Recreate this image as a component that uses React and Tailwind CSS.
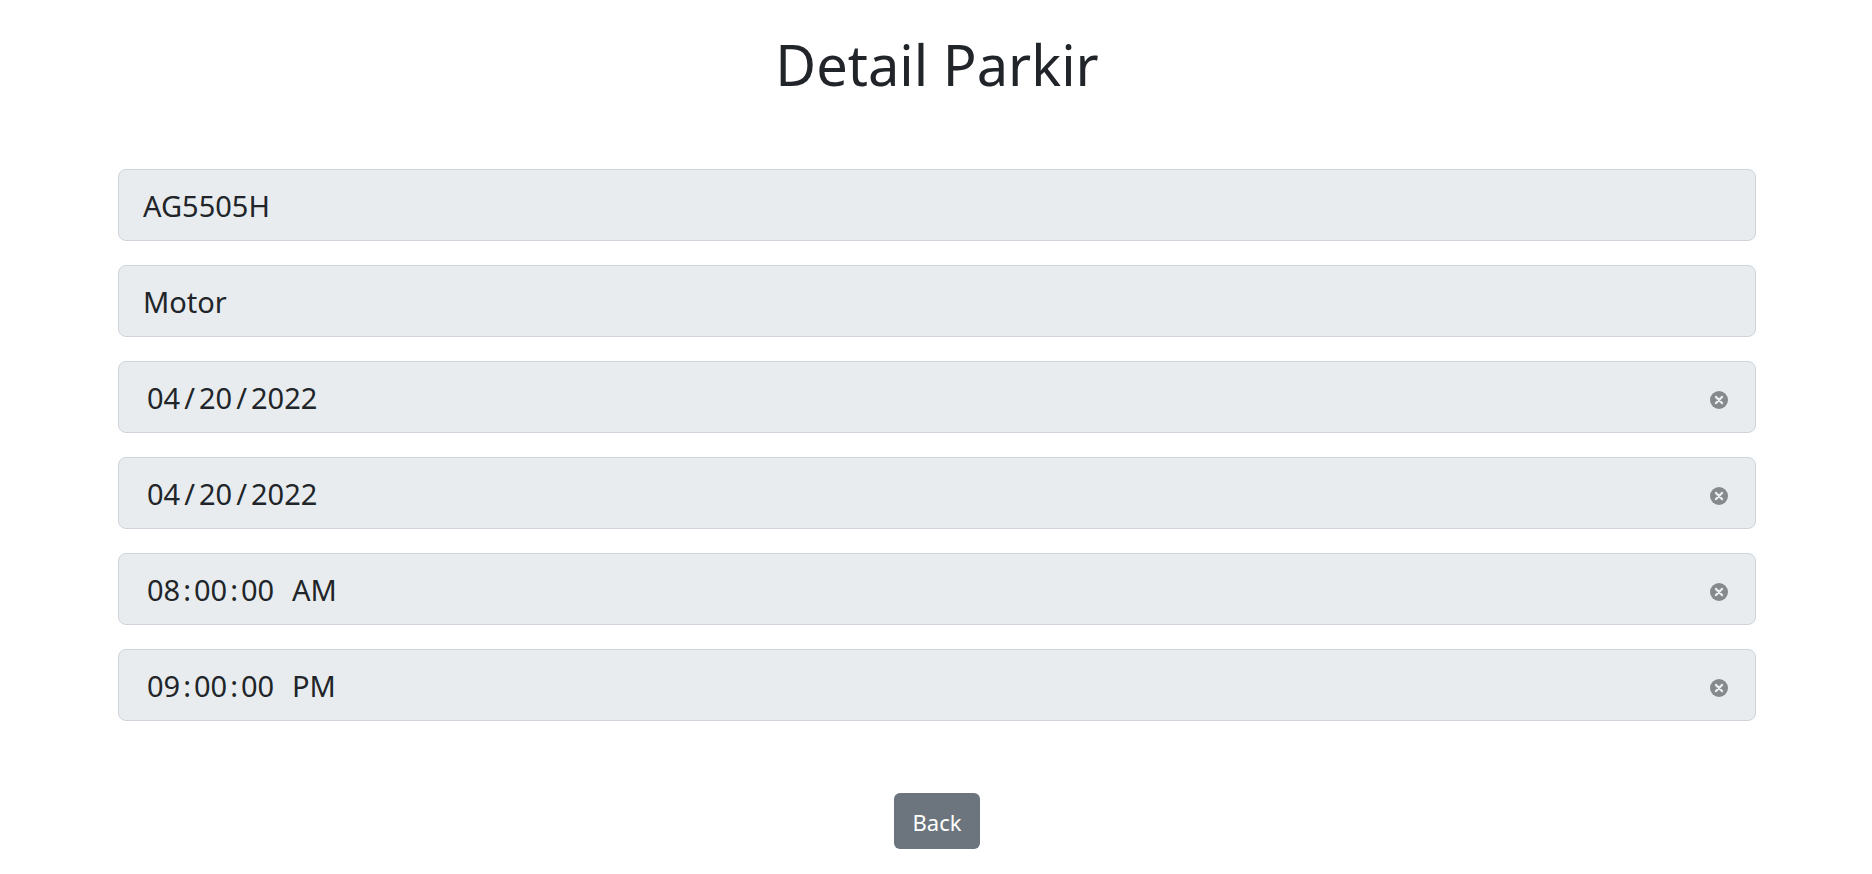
const fields = [
  { id: 'plate', label: 'Plat Nomor', type: 'text', value: 'AG5505H' },
  { id: 'vehicle', label: 'Jenis Kendaraan', type: 'text', value: 'Motor' },
  { id: 'date-in', label: 'Tanggal Masuk', type: 'date', value: '2022-04-20' },
  { id: 'date-out', label: 'Tanggal Keluar', type: 'date', value: '2022-04-20' },
  { id: 'time-in', label: 'Jam Masuk', type: 'time', value: '08:00:00' },
  { id: 'time-out', label: 'Jam Keluar', type: 'time', value: '21:00:00' },
];

const inputStyles = {
  text: 'pb-0.5',
  date: 'pl-px [&::-webkit-calendar-picker-indicator]:hidden [&::-webkit-datetime-edit-month-field]:px-[3px] [&::-webkit-datetime-edit-day-field]:px-[3px] [&::-webkit-datetime-edit-year-field]:px-[3px] [&::-webkit-datetime-edit-text]:px-px',
  time: 'pl-px [&::-webkit-calendar-picker-indicator]:hidden [&::-webkit-datetime-edit-hour-field]:px-[3px] [&::-webkit-datetime-edit-minute-field]:px-[3px] [&::-webkit-datetime-edit-second-field]:px-[3px] [&::-webkit-datetime-edit-ampm-field]:pl-[10px]',
};

function ClearIcon() {
  return (
    <svg viewBox="0 0 18 18" className="block size-[18px]" aria-hidden="true">
      <circle cx="9" cy="9" r="9" fill="#85898c" />
      <path d="M5.9 5.9l6.2 6.2M12.1 5.9l-6.2 6.2" stroke="#e9ecef" strokeWidth="2.2" strokeLinecap="round" />
    </svg>
  );
}

function Field({ id, label, type, value }) {
  const clearable = type !== 'text';
  return (
    <div className="flex h-[72px] items-center rounded-lg border border-[#ced4da] bg-[#e8ecef] px-6 pt-0.5">
      <label htmlFor={id} className="sr-only">{label}</label>
      <input
        id={id}
        type={type}
        step={type === 'time' ? 1 : undefined}
        defaultValue={value}
        readOnly
        className={`h-12 min-w-0 flex-1 bg-transparent outline-none ${inputStyles[type]}`}
      />
      {clearable && (
        <button type="button" aria-label={`Hapus ${label}`} className="mr-[3px] mt-1">
          <ClearIcon />
        </button>
      )}
    </div>
  );
}

export default function App() {
  return (
    <main className="bg-white pt-7 pr-[116px] pb-6 pl-[118px] font-['Noto_Sans',sans-serif] text-[29px] text-[#212529]">
      <h1 className="text-center text-[56px] leading-[72px]">Detail Parkir</h1>
      <form className="mt-[69px]" onSubmit={(e) => e.preventDefault()}>
        <div className="flex flex-col gap-6">
          {fields.map((field) => (
            <Field key={field.id} {...field} />
          ))}
        </div>
        <div className="mt-[72px] flex justify-center">
          <button type="button" className="h-14 rounded-md bg-[#6c757d] px-[19px] pt-0.5 text-[22px] text-white">
            Back
          </button>
        </div>
      </form>
    </main>
  );
}
